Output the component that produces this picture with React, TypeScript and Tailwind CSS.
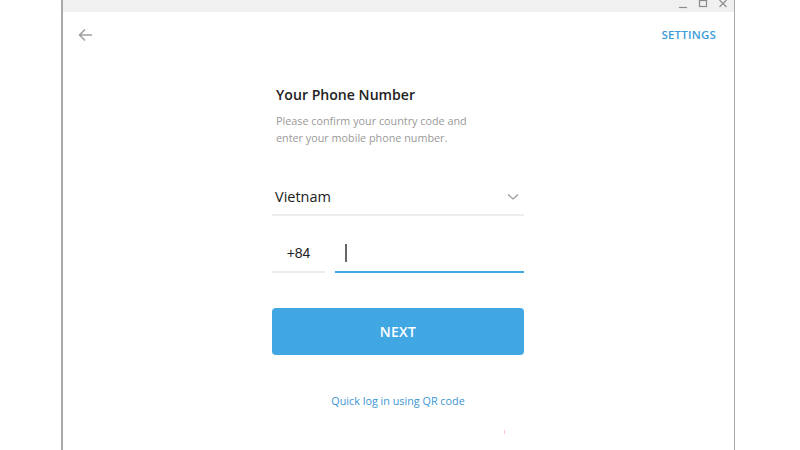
import React from "react";

export default function App() {
  return (
    <div className="w-[800px] h-[450px] bg-white flex overflow-hidden" style={{ fontFamily: '"Open Sans", "Noto Sans", sans-serif' }}>
      <div className="ml-[61px] w-[674px] h-full border-l-2 border-r border-[#a9a9a9] flex flex-col relative">
        {/* title bar */}
        <div className="h-[12px] bg-[#f0f0f0] flex justify-end items-start pr-[6px] shrink-0">
          <div className="flex items-center gap-[10px] text-[#8a8a8a] -mt-[1px]">
            <svg width="10" height="10" viewBox="0 0 10 10"><path d="M1 8.5H9" stroke="#8a8a8a" strokeWidth="1.2" /></svg>
            <svg width="10" height="10" viewBox="0 0 10 10"><rect x="1.5" y="1.5" width="7" height="6" fill="none" stroke="#8a8a8a" strokeWidth="1.2" /></svg>
            <svg width="10" height="10" viewBox="0 0 10 10"><path d="M1.5 1L8.5 8M8.5 1L1.5 8" stroke="#8a8a8a" strokeWidth="1.1" /></svg>
          </div>
        </div>
        {/* header */}
        <div className="flex items-center justify-between pl-[14px] pr-[18px] h-[46px] shrink-0">
          <svg width="16" height="14" viewBox="0 0 16 14">
            <path d="M15 7H2.5M8 1.5L2.5 7L8 12.5" fill="none" stroke="#a0a0a0" strokeWidth="1.6" />
          </svg>
          <span className="text-[11.5px] font-semibold text-[#3d9ad8] tracking-[0.2px]">SETTINGS</span>
        </div>
        {/* form */}
        <div className="flex flex-col items-center pr-[1px]">
          <div className="w-[252px] flex flex-col">
            <div className="pl-[4px] mt-[27px] text-[14.1px] font-semibold text-[#222] leading-[20px]">Your Phone Number</div>
            <div className="pl-[4px] mt-[7px] text-[10.8px] text-[#999] leading-[17px]">
              Please confirm your country code and<br />enter your mobile phone number.
            </div>
            <div className="mt-[33px] h-[37px] border-b-2 border-[#ececec] flex items-center justify-between pl-[3px] pr-[5px]">
              <span className="text-[14.5px] text-[#222]">Vietnam</span>
              <svg width="12" height="8" viewBox="0 0 12 8"><path d="M1 1.5L6 6L11 1.5" fill="none" stroke="#999" strokeWidth="1.3" /></svg>
            </div>
            <div className="mt-[20px] flex items-end">
              <div className="w-[53px] h-[37px] border-b-2 border-[#ececec] flex items-center justify-center">
                <span className="text-[14px] text-[#222] -mt-[1px]" style={{ fontFamily: '"Liberation Sans", Arial, sans-serif' }}>+84</span>
              </div>
              <div className="ml-[10px] flex-1 h-[37px] border-b-2 border-[#3fa6e0] flex items-center pl-[10px]">
                <div className="w-[1.5px] h-[18px] bg-[#666] -mt-[2px]" />
              </div>
            </div>
            <button className="mt-[35px] h-[47px] rounded-[4px] bg-[#40a7e3] text-white text-[14px] font-semibold tracking-[0.3px]">NEXT</button>
            <div className="mt-[38px] text-center text-[10.8px] text-[#3a95d5]">Quick log in using QR code</div>
          </div>
        </div>
        <div className="absolute left-[441px] top-[430px] w-px h-[4px] bg-[#f7c6d6]" />
      </div>
    </div>
  );
}
